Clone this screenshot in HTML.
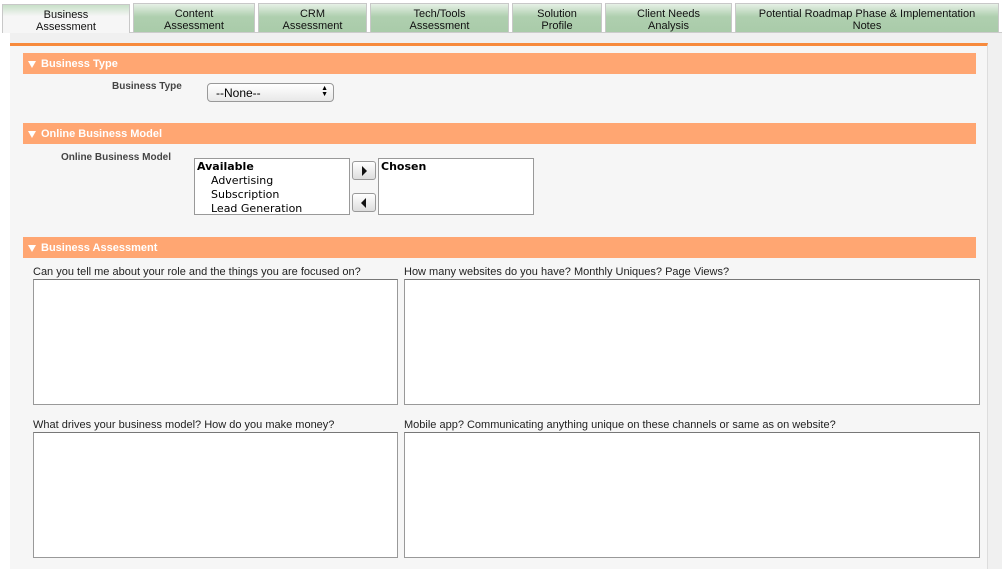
<!DOCTYPE html>
<html><head><style>
body{margin:0;width:1002px;height:569px;background:#fff;font-family:"Liberation Sans",Arial,sans-serif;position:relative;overflow:hidden}
.a{position:absolute;box-sizing:border-box}
.tab{position:absolute;top:3px;height:29px;box-sizing:border-box;border:1px solid #c8c8c8;border-bottom:none;background:linear-gradient(#e6f0e6,#afcfaf 45%,#a9cba9);font-size:11px;line-height:12px;text-align:center;padding-top:4px;color:#111}
.tab.act{background:linear-gradient(#c8e0c8,#f6f6f6 40%,#f6f6f6);top:4px;height:29px}
.hdr{position:absolute;left:23px;width:953px;height:21px;background:#ffa672;color:#fff;font-weight:bold;font-size:11px;line-height:23px;padding-left:18px;box-sizing:border-box}
.hdr:before{content:"";position:absolute;left:5px;top:8px;border-left:4px solid transparent;border-right:4px solid transparent;border-top:7px solid #fff}
.lbl{position:absolute;font-size:10px;font-weight:bold;color:#444}
.ta{position:absolute;background:#fff;border:1px solid #999;border-top-color:#777;box-sizing:border-box}
.q{position:absolute;font-size:11px;color:#222}
.lb{position:absolute;background:#fff;border:1px solid #999;font-family:"DejaVu Sans",sans-serif;font-size:11px;line-height:14px;box-sizing:border-box;padding:1px 2px}
.btn{position:absolute;width:24px;height:19px;border:1px solid #999;border-radius:3px;background:linear-gradient(#fff,#ddd);box-sizing:border-box}
</style></head><body>
<div class="a" style="left:10px;top:32px;width:992px;height:537px;background:#f0f0f0;border-top:1px solid #ccc"></div>
<div class="a" style="left:10px;top:43px;width:978px;height:526px;background:#f6f6f6;border-top:3px solid #f78a3c;border-right:1px solid #ddd"></div>
<div class="tab act" style="left:2px;width:128px">Business<br>Assessment</div>
<div class="tab" style="left:133px;width:122px">Content<br>Assessment</div>
<div class="tab" style="left:258px;width:109px">CRM<br>Assessment</div>
<div class="tab" style="left:370px;width:139px">Tech/Tools<br>Assessment</div>
<div class="tab" style="left:512px;width:90px">Solution<br>Profile</div>
<div class="tab" style="left:605px;width:127px">Client Needs<br>Analysis</div>
<div class="tab" style="left:735px;width:264px">Potential Roadmap Phase &amp; Implementation<br>Notes</div>

<div class="hdr" style="top:53px">Business Type</div>
<div class="lbl" style="left:112px;top:81px">Business Type</div>
<div class="a" style="left:207px;top:83px;width:127px;height:19px;border:1px solid #999;border-radius:4px;background:linear-gradient(#fff,#e8e8e8);font-size:12px;padding:2px 0 0 8px">--None--<span style="position:absolute;right:5px;top:2px;font-size:7px;line-height:6px">▲<br>▼</span></div>

<div class="hdr" style="top:123px">Online Business Model</div>
<div class="lbl" style="left:61px;top:152px">Online Business Model</div>
<div class="lb" style="left:194px;top:158px;width:156px;height:57px"><b>Available</b><br>&nbsp;&nbsp;&nbsp;&nbsp;Advertising<br>&nbsp;&nbsp;&nbsp;&nbsp;Subscription<br>&nbsp;&nbsp;&nbsp;&nbsp;Lead Generation</div>
<div class="btn" style="left:352px;top:161px"><div class="a" style="left:9px;top:4px;border-top:5px solid transparent;border-bottom:5px solid transparent;border-left:5px solid #111"></div></div>
<div class="btn" style="left:352px;top:193px"><div class="a" style="left:8px;top:4px;border-top:5px solid transparent;border-bottom:5px solid transparent;border-right:5px solid #111"></div></div>
<div class="lb" style="left:378px;top:158px;width:156px;height:57px"><b>Chosen</b></div>

<div class="hdr" style="top:237px">Business Assessment</div>
<div class="q" style="left:33px;top:266px">Can you tell me about your role and the things you are focused on?</div>
<div class="q" style="left:404px;top:266px">How many websites do you have? Monthly Uniques? Page Views?</div>
<div class="ta" style="left:33px;top:279px;width:365px;height:126px"></div>
<div class="ta" style="left:404px;top:279px;width:576px;height:126px"></div>
<div class="q" style="left:33px;top:419px">What drives your business model? How do you make money?</div>
<div class="q" style="left:404px;top:419px">Mobile app? Communicating anything unique on these channels or same as on website?</div>
<div class="ta" style="left:33px;top:432px;width:365px;height:126px"></div>
<div class="ta" style="left:404px;top:432px;width:576px;height:126px"></div>
</body></html>
